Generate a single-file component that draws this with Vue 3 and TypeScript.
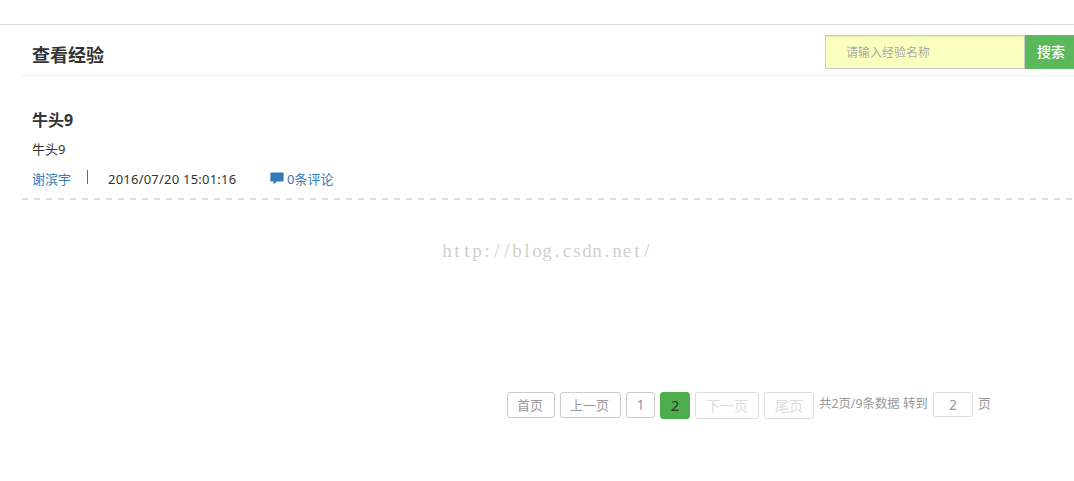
<template>
  <div class="page">
    <div class="top-line"></div>
    <div class="content">
      <!-- 标题与搜索 -->
      <div class="header">
        <h1>查看经验</h1>
        <div class="search">
          <input v-model="keyword" class="search-input" type="text" placeholder="请输入经验名称" />
          <button class="search-btn" @click="search">搜索</button>
        </div>
      </div>

      <!-- 经验列表 -->
      <div v-for="item in shownList" :key="item.id" class="item">
        <h2>{{ item.title }}</h2>
        <p class="summary">{{ item.content }}</p>
        <div class="meta">
          <a class="author">{{ item.author }}</a>
          <span class="split"></span>
          <span class="time">{{ item.time }}</span>
          <a class="comment">
            <svg width="14" height="13" viewBox="0 0 14 13">
              <path d="M1 0.5h12q0.6 0 0.6 0.6v7.8q0 0.6-0.6 0.6H6.6L3.6 12.4V9.5H1q-0.6 0-0.6-0.6V1.1q0-0.6 0.6-0.6z" fill="#337ab7" />
            </svg>
            <span>{{ item.comments }}条评论</span>
          </a>
        </div>
      </div>

      <!-- 水印，逐字等宽排列 -->
      <div class="watermark"><span v-for="(ch, i) in watermark" :key="i">{{ ch }}</span></div>

      <!-- 分页 -->
      <div class="pager">
        <button class="first" @click="goTo(1)">首页</button>
        <button class="prev" @click="goTo(current - 1)">上一页</button>
        <button
          v-for="n in totalPage"
          :key="n"
          class="num"
          :class="{ active: n === current }"
          @click="goTo(n)"
        >{{ n }}</button>
        <button class="next" :disabled="current === totalPage" @click="goTo(current + 1)">下一页</button>
        <button class="last" :disabled="current === totalPage" @click="goTo(totalPage)">尾页</button>
        <span class="info">共{{ totalPage }}页/{{ totalCount }}条数据 转到</span>
        <input v-model="target" class="jump" type="text" @keyup.enter="goTo(Number(target))" />
        <span class="unit">页</span>
      </div>
    </div>
  </div>
</template>

<script setup lang="ts">
import { ref, computed } from 'vue'

interface Experience {
  id: number
  title: string
  content: string
  author: string
  time: string
  comments: number
}

const keyword = ref('')       // 输入框内容
const activeKeyword = ref('') // 已提交的搜索词
const current = ref(2)
const target = ref('2')
const totalPage = 2
const totalCount = 9
const watermark = 'http://blog.csdn.net/'.split('')

const list = ref<Experience[]>([
  { id: 9, title: '牛头9', content: '牛头9', author: '谢滨宇', time: '2016/07/20 15:01:16', comments: 0 }
])

const shownList = computed(() => list.value.filter(item => item.title.includes(activeKeyword.value)))

// 搜索
const search = () => {
  activeKeyword.value = keyword.value.trim()
}

// 跳转页码
const goTo = (page: number) => {
  if (!(page >= 1 && page <= totalPage)) return
  current.value = page
  target.value = String(page)
}
</script>

<style>
body {
  margin: 0;
  background: #fff;
  overflow: hidden;
}
</style>

<style scoped>
.page {
  height: 481px;
  overflow: hidden;
  font-family: "Noto Sans", "Noto Sans CJK SC", sans-serif;
  font-size: 13px;
  color: #333;
}

.page * {
  box-sizing: border-box;
}

button,
input {
  font-family: inherit;
  margin: 0;
  padding: 0;
  outline: none;
}

.top-line {
  height: 25px;
  border-bottom: 1px solid #ddd;
}

.content {
  margin-left: 22px;
}

.header {
  display: flex;
  justify-content: space-between;
  height: 51px;
  padding: 10px 0 0 10px;
  border-bottom: 1px solid #eee;
}

h1 {
  margin: 0;
  font-size: 18px;
  line-height: 40px;
  font-weight: 700;
}

.search {
  display: flex;
  height: 34px;
}

.search-input {
  width: 200px;
  padding: 0 20px;
  border: 1px solid #ccc;
  background: #faffbd;
  box-shadow: inset 0 1px 1px rgba(0, 0, 0, 0.075);
  font-size: 12px;
}

.search-input::placeholder {
  color: #aaa;
  opacity: 1;
}

.search-btn {
  width: 49px;
  padding: 0 0 2px 3px;
  border: none;
  background: #5cb85c;
  color: #fff;
  font-size: 14px;
  font-weight: 500;
}

.item {
  height: 124px;
  padding: 33px 0 0 10px;
  background: repeating-linear-gradient(90deg, #ddd 0 6px, transparent 6px 12px) left bottom / 100% 2px no-repeat;
}

h2 {
  margin: 0;
  font-size: 16px;
  line-height: 22px;
  font-weight: 700;
}

.summary {
  margin: 8px 0 0;
  line-height: 20px;
}

.meta {
  display: flex;
  align-items: center;
  height: 20px;
  margin-top: 9px;
}

.author,
.comment {
  color: #337ab7;
  cursor: pointer;
}

.split {
  width: 1px;
  height: 14px;
  margin: -2px 20px 0 16px;
  background: #337ab7;
}

.time {
  width: 162px;
  padding-top: 1px;
  letter-spacing: 0.22px;
}

.comment {
  display: flex;
  align-items: center;
  gap: 3px;
}

.watermark {
  display: flex;
  margin: 39px 0 0 420px;
  height: 24px;
  line-height: 24px;
  font-family: "Liberation Serif", serif;
  font-size: 19px;
  color: #cfcfca;
}

.watermark span {
  width: 10px;
  text-align: center;
}

.pager {
  display: flex;
  align-items: flex-start;
  gap: 5px;
  margin: 129px 0 0 485px;
  color: #999;
}

.pager button {
  height: 26px;
  padding: 0 2px 1px 0;
  border: 1px solid #ccc;
  border-radius: 3px;
  background: #fff;
  color: #999;
  font-size: 13px;
  line-height: 22px;
  cursor: pointer;
}

.pager .first {
  width: 48px;
}

.pager .prev {
  width: 61px;
}

.pager .num {
  width: 29px;
  padding-right: 0;
  font-size: 14px;
}

.pager .num.active {
  width: 30px;
  height: 27px;
  border-color: #4cae4c;
  background: #4cae4c;
  color: #333;
  font-size: 15px;
}

.pager button:disabled {
  width: 64px;
  height: 27px;
  padding: 0;
  border-color: #ddd;
  color: #ddd;
  font-size: 14px;
  cursor: default;
}

.pager .last:disabled {
  width: 50px;
}

.info {
  width: 109px;
  font-size: 12.4px;
  line-height: 23px;
  white-space: nowrap;
}

.jump {
  width: 40px;
  height: 25px;
  border: 1px solid #ddd;
  border-radius: 3px;
  color: #999;
  font-size: 14px;
  text-align: center;
}

.unit {
  line-height: 23px;
}
</style>
